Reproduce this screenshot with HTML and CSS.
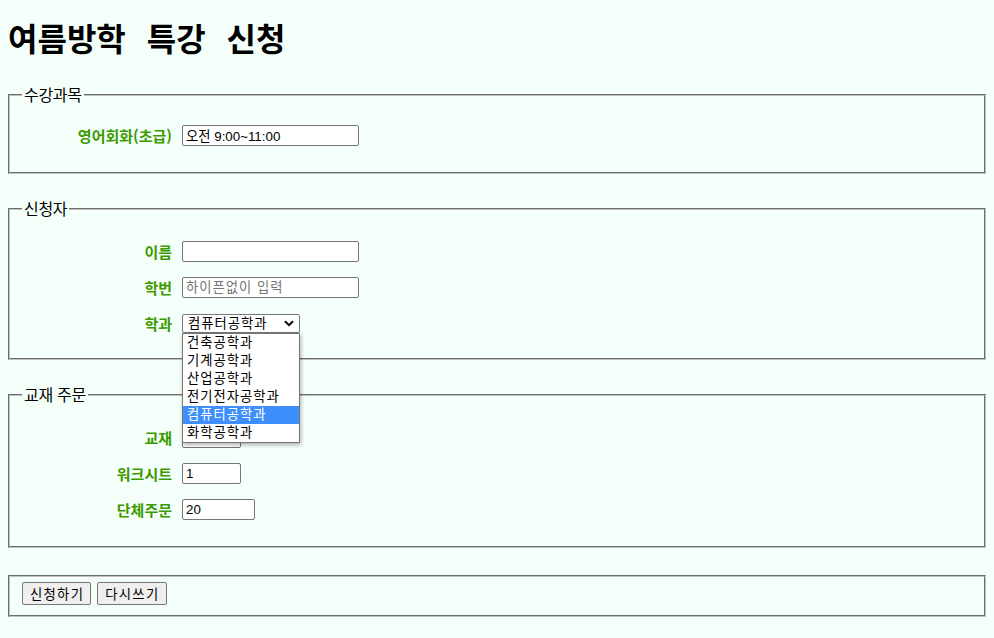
FILE: index.html
```html
<!DOCTYPE html>
<html lang="ko">
<head>
<meta charset="utf-8">
<title>여름방학 특강 신청</title>
<link rel="stylesheet" href="styles.css">
</head>
<body>
<h1 class="title">여름방학 특강 신청</h1>
<form class="apply">
  <fieldset class="group">
    <legend class="group-legend">수강과목</legend>
    <div class="row">
      <label class="row-label">영어회화(초급)</label>
      <input class="field field-wide" type="text" value="오전 9:00~11:00">
    </div>
  </fieldset>

  <fieldset class="group group-tall">
    <legend class="group-legend">신청자</legend>
    <div class="row">
      <label class="row-label">이름</label>
      <input class="field field-wide" type="text">
    </div>
    <div class="row">
      <label class="row-label">학번</label>
      <input class="field field-wide" type="text" placeholder="하이픈없이 입력">
    </div>
    <div class="row">
      <label class="row-label">학과</label>
      <span class="select-wrap">
        <select class="select">
          <option>건축공학과</option>
          <option>기계공학과</option>
          <option>산업공학과</option>
          <option>전기전자공학과</option>
          <option selected>컴퓨터공학과</option>
          <option>화학공학과</option>
        </select>
        <svg class="select-arrow" width="10" height="7" viewBox="0 0 10 7"><polyline points="1,1.2 5,5.2 9,1.2" fill="none" stroke="#000" stroke-width="2"/></svg>
        <ul class="dropdown">
          <li class="dropdown-item">건축공학과</li>
          <li class="dropdown-item">기계공학과</li>
          <li class="dropdown-item">산업공학과</li>
          <li class="dropdown-item">전기전자공학과</li>
          <li class="dropdown-item is-active">컴퓨터공학과</li>
          <li class="dropdown-item">화학공학과</li>
        </ul>
      </span>
    </div>
  </fieldset>

  <fieldset class="group group-tall group-books">
    <legend class="group-legend">교재 주문</legend>
    <div class="row">
      <label class="row-label">교재</label>
      <input class="field field-small" type="text">
    </div>
    <div class="row">
      <label class="row-label">워크시트</label>
      <input class="field field-small" type="text" value="1">
    </div>
    <div class="row">
      <label class="row-label">단체주문</label>
      <input class="field field-mid" type="text" value="20">
    </div>
  </fieldset>

  <fieldset class="group group-buttons">
    <button class="btn" type="submit">신청하기</button>
    <button class="btn" type="reset">다시쓰기</button>
  </fieldset>
</form>
</body>
</html>
```

FILE: styles.css
```css
html {
  background: #f5fffa;
}

body {
  margin: 8px;
  background: #f5fffa;
  font-family: "Noto Sans CJK KR", sans-serif;
  font-size: 16px;
  color: #000;
}

.title {
  font-size: 32px;
  line-height: 37px;
  font-weight: bold;
  margin: 11px 0 29px;
  word-spacing: 12px;
}

.apply {
  display: flex;
  flex-direction: column;
  gap: 25.5px;
  margin: 0;
}

.group {
  margin: 0;
  padding: 5.6px 12px 10px;
  border: 2px groove rgb(192, 192, 192);
}

.group-tall {
  padding-top: 7px;
  padding-bottom: 8.6px;
}

.group-books {
  padding-bottom: 10.5px;
}

.group-legend {
  font-size: 16px;
  line-height: 19px;
  padding: 0 2px;
  letter-spacing: -0.3px;
}

.row {
  display: flex;
  align-items: center;
  height: 20px;
  margin: 16px 0;
}

.row-label {
  width: 150px;
  margin-right: 10px;
  text-align: right;
  font-weight: bold;
  font-size: 15px;
  color: #3a9a00;
}

.field {
  box-sizing: border-box;
  height: 21px;
  padding: 1px 3px;
  border: 1px solid #767676;
  border-radius: 2px;
  background: #fff;
  font-family: "Liberation Sans", "Noto Sans CJK KR", sans-serif;
  font-size: 13.33px;
  color: #000;
  margin: 0;
}

.field::placeholder {
  color: #757575;
  letter-spacing: 1px;
}

.field-wide {
  width: 177px;
}

.field-small {
  width: 59px;
}

.field-mid {
  width: 73px;
}

.select-wrap {
  position: relative;
  display: inline-block;
}

.select {
  appearance: none;
  -webkit-appearance: none;
  box-sizing: border-box;
  display: block;
  width: 118px;
  height: 19px;
  margin: 0;
  padding: 0 0 0 5px;
  border: 1px solid #767676;
  border-radius: 2px;
  background: #fff;
  font-family: "Liberation Sans", "Noto Sans CJK KR", sans-serif;
  font-size: 13.33px;
  line-height: 17px;
  letter-spacing: 1px;
  color: #000;
}

.select-arrow {
  position: absolute;
  right: 6px;
  top: 6px;
  pointer-events: none;
}

.dropdown {
  position: absolute;
  left: 0;
  top: 19px;
  z-index: 10;
  box-sizing: border-box;
  width: 118px;
  margin: 0;
  padding: 0;
  list-style: none;
  background: #fff;
  border: 1px solid #767676;
  box-shadow: 1px 2px 4px rgba(0, 0, 0, 0.3);
  font-family: "Liberation Sans", "Noto Sans CJK KR", sans-serif;
  font-size: 13.33px;
  letter-spacing: 1px;
}

.dropdown-item {
  height: 18px;
  line-height: 18px;
  padding-left: 4px;
  white-space: nowrap;
  color: #000;
}

.dropdown-item.is-active {
  background: #3d8ffd;
  color: #fff;
}

.group-buttons {
  display: flex;
  gap: 6px;
  margin-top: 2px;
  padding-top: 5px;
}

.btn {
  box-sizing: border-box;
  height: 23px;
  margin: 0;
  padding: 1px 6px 1px 7px;
  border: 1px solid #767676;
  border-radius: 2px;
  background: #efefef;
  font-family: "Noto Sans CJK KR", sans-serif;
  font-size: 13.33px;
  letter-spacing: 1.3px;
  color: #000;
}
```
